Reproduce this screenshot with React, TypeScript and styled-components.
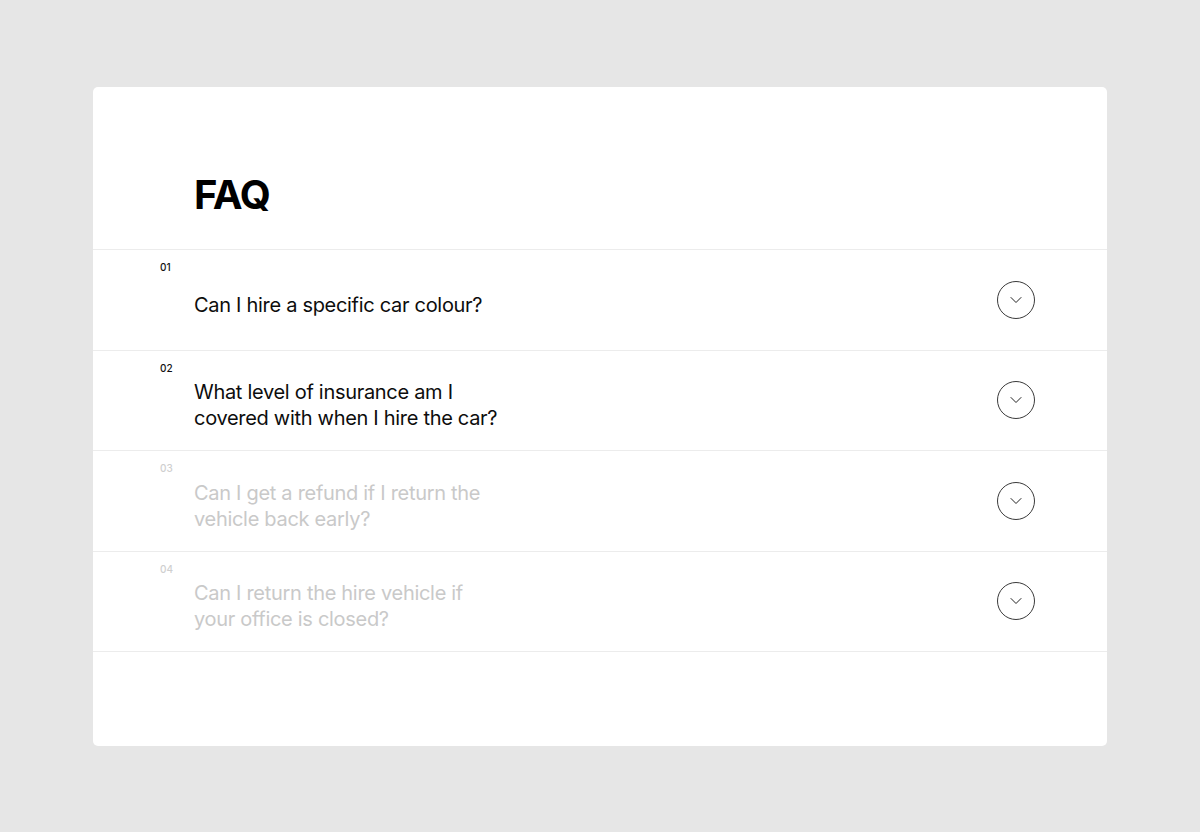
import styled, { createGlobalStyle } from "styled-components";
import { ChevronDown } from "lucide-react";

interface Question {
  id: string;
  text: string;
  active: boolean;
}

const questions: Question[] = [
  { id: "01", text: "Can I hire a specific car colour?", active: true },
  {
    id: "02",
    text: "What level of insurance am I covered with when I hire the car?",
    active: true,
  },
  {
    id: "03",
    text: "Can I get a refund if I return the vehicle back early?",
    active: false,
  },
  {
    id: "04",
    text: "Can I return the hire vehicle if your office is closed?",
    active: false,
  },
];

const App = () => {
  return (
    <>
      <GlobalStyle />
      <Page>
        <Card>
          <Header>
            <Title>FAQ</Title>
          </Header>

          <List>
            {questions.map((q) => (
              <Row key={q.id}>
                <Index $active={q.active}>{q.id}</Index>
                <QuestionText $active={q.active}>{q.text}</QuestionText>
                <ToggleButton aria-label="Expand">
                  <ChevronDown size={20} strokeWidth={1.2} />
                </ToggleButton>
              </Row>
            ))}
          </List>
        </Card>
      </Page>
    </>
  );
};

const GlobalStyle = createGlobalStyle`
  html, body {
    margin: 0;
    padding: 0;
    background: #e6e6e6;
    font-family: Inter, "Liberation Sans", Arial, sans-serif;
    -webkit-font-smoothing: antialiased;
  }
`;

const Page = styled.div`
  min-height: 832px;
  padding-top: 87px;
  box-sizing: border-box;
`;

const Card = styled.div`
  width: 1014px;
  height: 659px;
  margin: 0 auto;
  background: #ffffff;
  border-radius: 5px;
  overflow: hidden;
`;

const Header = styled.div`
  height: 162px;
  box-sizing: border-box;
  padding: 88px 0 0 101px;
`;

const Title = styled.h1`
  margin: 0;
  font-size: 40px;
  line-height: 40px;
  font-weight: 700;
  letter-spacing: -0.03em;
  color: #000000;
`;

const List = styled.div`
  display: flex;
  flex-direction: column;
  border-bottom: 1px solid #ececec;
`;

const Row = styled.div`
  display: grid;
  grid-template-columns: 34px 1fr auto;
  align-items: center;
  height: 100.5px;
  box-sizing: border-box;
  padding: 0 72px 0 67px;
  border-top: 1px solid #ececec;
`;

const Index = styled.span<{ $active: boolean }>`
  align-self: start;
  padding-top: 11px;
  font-size: 10px;
  line-height: 12px;
  font-weight: 500;
  color: ${(p) => (p.$active ? "#111111" : "#cfcfcf")};
`;

const QuestionText = styled.p<{ $active: boolean }>`
  margin: 10px 0 0;
  max-width: 310px;
  font-size: 20px;
  line-height: 26px;
  font-weight: 400;
  letter-spacing: -0.015em;
  color: ${(p) => (p.$active ? "#0d0d0d" : "#c9c9c9")};
`;

const ToggleButton = styled.button`
  width: 38px;
  height: 38px;
  border-radius: 50%;
  border: 1px solid #3a3a3a;
  background: transparent;
  color: #222222;
  padding: 0;
  display: flex;
  align-items: center;
  justify-content: center;
  cursor: pointer;
`;

export default App;
